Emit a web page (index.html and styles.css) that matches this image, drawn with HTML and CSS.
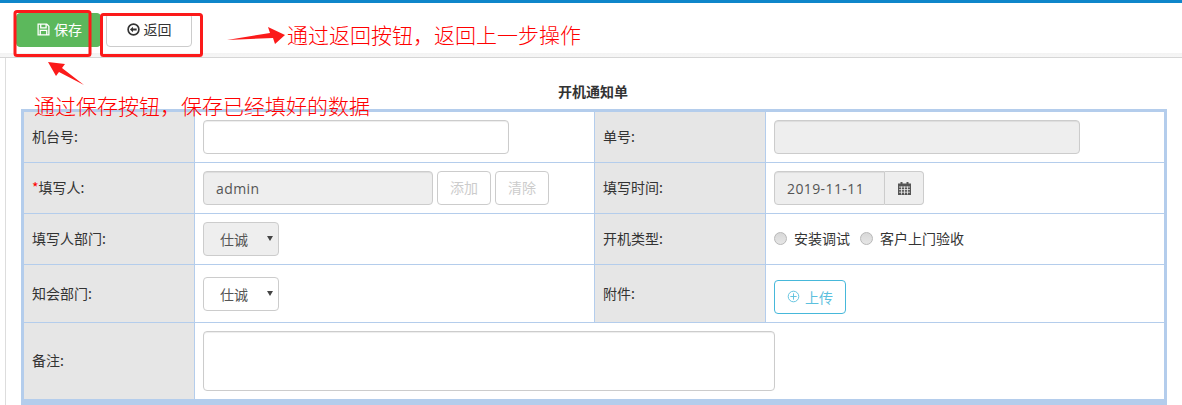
FILE: index.html
```html
<!DOCTYPE html>
<html lang="zh-CN">
<head>
<meta charset="utf-8">
<title>开机通知单</title>
<link rel="stylesheet" href="styles.css">
</head>
<body>
<div class="topbar"></div>
<div class="toolbar">
  <button class="btn btn-save" type="button">
    <svg class="ico" viewBox="0 0 14 14"><path d="M1.2 1.2h9.3l2.3 2.3v9.3H1.2z M4 1.2v4h5.8v-4 M3.5 12.8V8h7v4.8" fill="none" stroke="currentColor" stroke-width="1.4"/></svg>保存
  </button>
  <button class="btn btn-back" type="button">
    <svg class="ico" viewBox="0 0 14 14"><circle cx="7" cy="7" r="5.8" fill="none" stroke="currentColor" stroke-width="1.8"/><path d="M3.2 7l3.2-3v2h4v2h-4v2z" fill="currentColor"/></svg>返回
  </button>
</div>
<main class="content">
  <h1 class="title">开机通知单</h1>
  <table class="form">
    <colgroup><col class="c1"><col class="c2"><col class="c3"><col class="c4"></colgroup>
    <tr>
      <th>机台号:</th>
      <td><input class="field w306" type="text"></td>
      <th>单号:</th>
      <td><input class="field w306 off" type="text" disabled></td>
    </tr>
    <tr>
      <th><span class="req">*</span>填写人:</th>
      <td><div class="inline">
        <input class="field w230 off" type="text" value="admin" disabled>
        <button class="mini" type="button" disabled>添加</button>
        <button class="mini" type="button" disabled>清除</button>
      </div></td>
      <th>填写时间:</th>
      <td><div class="date">
        <input class="field date-input off" type="text" value="2019-11-11" disabled>
        <span class="addon"><svg class="cal" viewBox="0 0 13 14"><path d="M0 2.5h2.5V1h2v1.5h4V1h2v1.5H13V14H0z" fill="#555"/><path d="M1 6h11M1 8.6h11M1 11.2h11M3.5 5.5v8M6.5 5.5v8M9.5 5.5v8" stroke="#eee" stroke-width=".8"/></svg></span>
      </div></td>
    </tr>
    <tr>
      <th>填写人部门:</th>
      <td><div class="sel off-sel"><select disabled><option>仕诚</option></select></div></td>
      <th>开机类型:</th>
      <td><div class="radios">
        <label><input type="radio" name="t" disabled>安装调试</label>
        <label><input type="radio" name="t" disabled>客户上门验收</label>
      </div></td>
    </tr>
    <tr>
      <th>知会部门:</th>
      <td><div class="sel"><select><option>仕诚</option></select></div></td>
      <th>附件:</th>
      <td><button class="upload" type="button"><svg class="ico-up" viewBox="0 0 14 14"><circle cx="7" cy="7" r="5.7" fill="none" stroke="currentColor"/><path d="M7 3.6v6.8M3.6 7h6.8" stroke="currentColor"/></svg>上传</button></td>
    </tr>
    <tr class="last">
      <th>备注:</th>
      <td colspan="3"><textarea class="note"></textarea></td>
    </tr>
  </table>
</main>

<svg class="marks" viewBox="0 0 1182 405" aria-hidden="true">
  <rect x="15" y="11.5" width="75" height="44" rx="2"/>
  <rect x="101.5" y="14.5" width="100" height="41" rx="2"/>
  <polygon class="arrow" points="227,40 270,33 268,27 285,35 275,44 273,38"/>
  <polygon class="arrow" points="48,62 65,64 62,68 84,85 59,72 56,76"/>
</svg>
<div class="note-a">通过返回按钮，返回上一步操作</div>
<div class="note-b">通过保存按钮，保存已经填好的数据</div>
</body>
</html>
```
FILE: styles.css
```css
* { box-sizing: border-box; }
html, body { margin: 0; padding: 0; height: 405px; overflow: hidden; background: #fff; }
body {
  position: relative;
  font-family: "Noto Sans CJK SC", "Open Sans", sans-serif;
  font-size: 14px;
  color: #333;
}
.topbar { height: 3px; background: #0e86ca; }
.toolbar {
  height: 55px;
  padding: 10px 0 0 16px;
  display: flex;
  align-items: flex-start;
  gap: 5px;
  border-bottom: 1px solid #d6d6d6;
  background: linear-gradient(to bottom, #fff 0, #fff 50px, #f3f3f3 50px, #f6f6f6 54px);
}
.btn {
  height: 34px;
  border-radius: 4px;
  font: inherit;
  font-size: 14px;
  display: flex;
  align-items: center;
  justify-content: center;
  gap: 4px;
  padding: 0 0 2px;
}
.btn-save { width: 85px; background: #5cb85c; border: 1px solid #5cb85c; color: #fff; padding-left: 2px; }
.btn-back { width: 86px; background: #fff; border: 1px solid #ccc; color: #333; }
.ico { width: 13px; height: 13px; }
.content {
  margin-left: 5px;
  border-left: 1px solid #ddd;
  padding-left: 15px;
  height: 347px;
}
.title {
  margin: 0;
  height: 51px;
  padding: 24px 2px 0 0;
  font-size: 14px;
  line-height: 18px;
  font-weight: 700;
  text-align: center;
  color: #333;
  width: 1146px;
}
.form {
  width: 1146px;
  table-layout: fixed;
  border-collapse: separate;
  border-spacing: 0;
  border: 3px solid #b4cdec;
  border-bottom-width: 6px;
}
.c1 { width: 171px; }
.c2 { width: 400px; }
.c3 { width: 171px; }
.c4 { width: 398px; }
th, td {
  padding: 8px;
  border-right: 1px solid #b4cdec;
  border-bottom: 1px solid #b4cdec;
  vertical-align: middle;
  font-size: 14px;
}
th { padding: 7px 8px 9px; }
td:last-child { border-right: 0; }
.last th, .last td { border-bottom: 0; }
th { background: #e6e6e6; font-weight: 400; text-align: left; }
.req { color: #f00; }
.field {
  display: block;
  height: 34px;
  border: 1px solid #ccc;
  border-radius: 4px;
  padding: 0 12px;
  font-family: "Open Sans", sans-serif;
  font-size: 14px;
  letter-spacing: .4px;
  color: #555;
  background: #fff;
  box-shadow: inset 0 1px 1px rgba(0,0,0,.075);
}
.off { background: #eee; color: #555; -webkit-text-fill-color: #555; opacity: 1; }
.w306 { width: 306px; }
.w230 { width: 230px; }
.inline { display: flex; gap: 4px; }
.mini {
  width: 54px;
  height: 34px;
  background: #fff;
  border: 1px solid #ccc;
  border-radius: 4px;
  font: inherit;
  font-size: 14px;
  color: #ccc;
  padding: 0 0 2px;
}
.date { display: flex; width: 150px; }
.date-input { width: 111px; border-radius: 4px 0 0 4px; }
.addon {
  width: 39px;
  height: 34px;
  display: flex;
  align-items: center;
  justify-content: center;
  background: #eee;
  border: 1px solid #ccc;
  border-left: 0;
  border-radius: 0 4px 4px 0;
}
.cal { width: 13px; height: 14px; }
.sel { position: relative; width: 76px; height: 34px; }
.sel::after {
  content: "";
  position: absolute;
  left: 64px;
  top: 14px;
  border: 3px solid transparent;
  border-top: 5px solid #444;
  border-bottom: 0;
}
.sel select {
  appearance: none;
  width: 100%;
  height: 100%;
  border: 1px solid #ccc;
  border-radius: 4px;
  padding: 0 0 0 16px;
  background: #fff;
  font: inherit;
  font-size: 14px;
  color: #555;
  opacity: 1;
}
.off-sel select { background: #eee; }
.radios { display: flex; gap: 10px; font-size: 14px; padding-bottom: 2px; }
.radios label { display: flex; align-items: center; gap: 7px; }
.radios input {
  appearance: none;
  margin: 0;
  width: 13px;
  height: 13px;
  border-radius: 50%;
  border: 1px solid #b8b8b8;
  background: linear-gradient(#d8d8d8, #e6e6e6);
}
.upload {
  margin-top: 7px;
  display: flex;
  align-items: center;
  justify-content: center;
  gap: 5px;
  width: 72px;
  height: 34px;
  padding: 0 0 1px;
  background: #fff;
  border: 1px solid #46b8da;
  border-radius: 4px;
  font: inherit;
  font-size: 14px;
  color: #5bc0de;
}
.ico-up { width: 13px; height: 13px; }
.note {
  display: block;
  width: 572px;
  height: 60px;
  border: 1px solid #ccc;
  border-radius: 4px;
  resize: none;
  box-shadow: inset 0 1px 1px rgba(0,0,0,.075);
}
.marks { position: absolute; left: 0; top: 0; width: 1182px; height: 405px; pointer-events: none; }
.marks rect { fill: none; stroke: #fb1a1a; stroke-width: 3; }
.marks .arrow { fill: #fb1a1a; }
.note-a, .note-b {
  position: absolute;
  font-size: 21px;
  font-weight: 300;
  line-height: 28px;
  color: #f00;
  white-space: nowrap;
}
.note-a { left: 287px; top: 20px; }
.note-b { left: 34px; top: 91px; }
```
